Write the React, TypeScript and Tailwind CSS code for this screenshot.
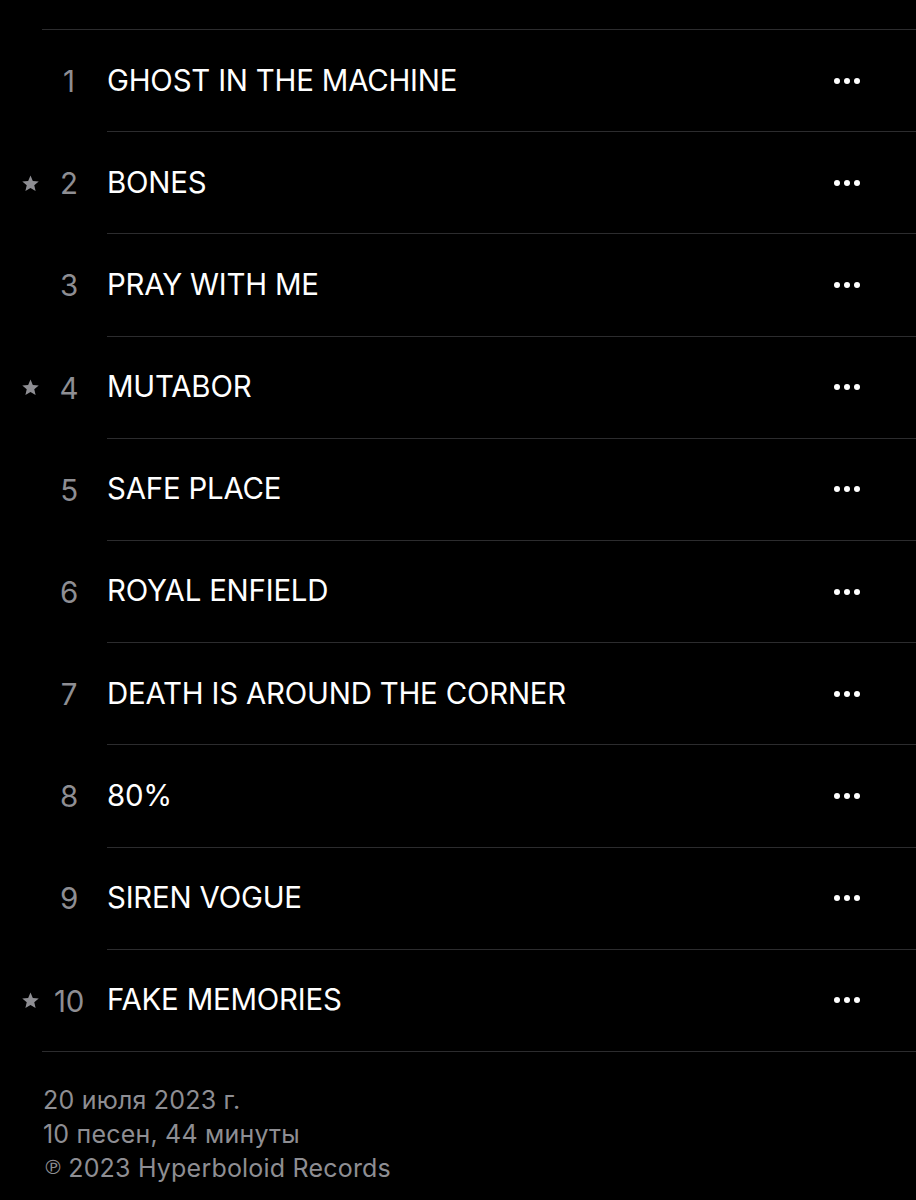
const tracks = [
  { n: 1, title: 'GHOST IN THE MACHINE', star: false },
  { n: 2, title: 'BONES', star: true },
  { n: 3, title: 'PRAY WITH ME', star: false },
  { n: 4, title: 'MUTABOR', star: true },
  { n: 5, title: 'SAFE PLACE', star: false },
  { n: 6, title: 'ROYAL ENFIELD', star: false },
  { n: 7, title: 'DEATH IS AROUND THE CORNER', star: false },
  { n: 8, title: '80%', star: false },
  { n: 9, title: 'SIREN VOGUE', star: false },
  { n: 10, title: 'FAKE MEMORIES', star: true },
];

function Star() {
  return (
    <svg className="w-[19px] h-[19px]" viewBox="0 0 24 24" fill="#8e8e93">
      <path d="M12 2l2.95 6.85 7.45.6-5.65 4.9 1.7 7.25L12 17.8l-6.45 3.8 1.7-7.25L1.6 9.45l7.45-.6z" />
    </svg>
  );
}

function More() {
  return (
    <div className="flex items-center gap-[4px]">
      <span className="w-[6px] h-[6px] rounded-full bg-white" />
      <span className="w-[6px] h-[6px] rounded-full bg-white" />
      <span className="w-[6px] h-[6px] rounded-full bg-white" />
    </div>
  );
}

export default function App() {
  return (
    <div
      className="w-[916px] h-[1200px] bg-black text-white overflow-hidden"
      style={{ fontFamily: 'Inter, "Noto Sans", sans-serif' }}
    >
      <div className="pt-[29px] pl-[42px]">
        <div className="border-t border-[#2c2c2e]" />
      </div>

      <div>
        {tracks.map((t, i) => (
          <div key={t.n} className="flex h-[102.2px]">
            <div className="w-[107px] shrink-0 flex items-center">
              <div className="w-[22px] ml-[19px] flex justify-center">{t.star && <Star />}</div>
              <div className="w-[56px] text-center text-[#8e8e93] text-[29.5px] tracking-[-0.2px]">
                {t.n}
              </div>
            </div>
            <div
              className={`flex-1 flex items-center justify-between pr-[56px] border-b border-[#2c2c2e] ${
                i === tracks.length - 1 ? '-ml-[65px] pl-[65px]' : ''
              }`}
            >
              <span className="text-[29.4px] tracking-[-0.2px]">{t.title}</span>
              <More />
            </div>
          </div>
        ))}
      </div>

      <div className="pl-[43px] pt-[31px] text-[#8e8e93] text-[25px] leading-[34px] tracking-[0.2px]">
        <div>20 июля 2023 г.</div>
        <div>10 песен, 44 минуты</div>
        <div className="flex items-baseline">
          <span className="text-[20px] leading-none relative -top-[3px] mr-[5px]" style={{ fontFamily: '"DejaVu Sans", sans-serif' }}>
            ℗
          </span>
          <span>2023 Hyperboloid Records</span>
        </div>
      </div>
    </div>
  );
}
